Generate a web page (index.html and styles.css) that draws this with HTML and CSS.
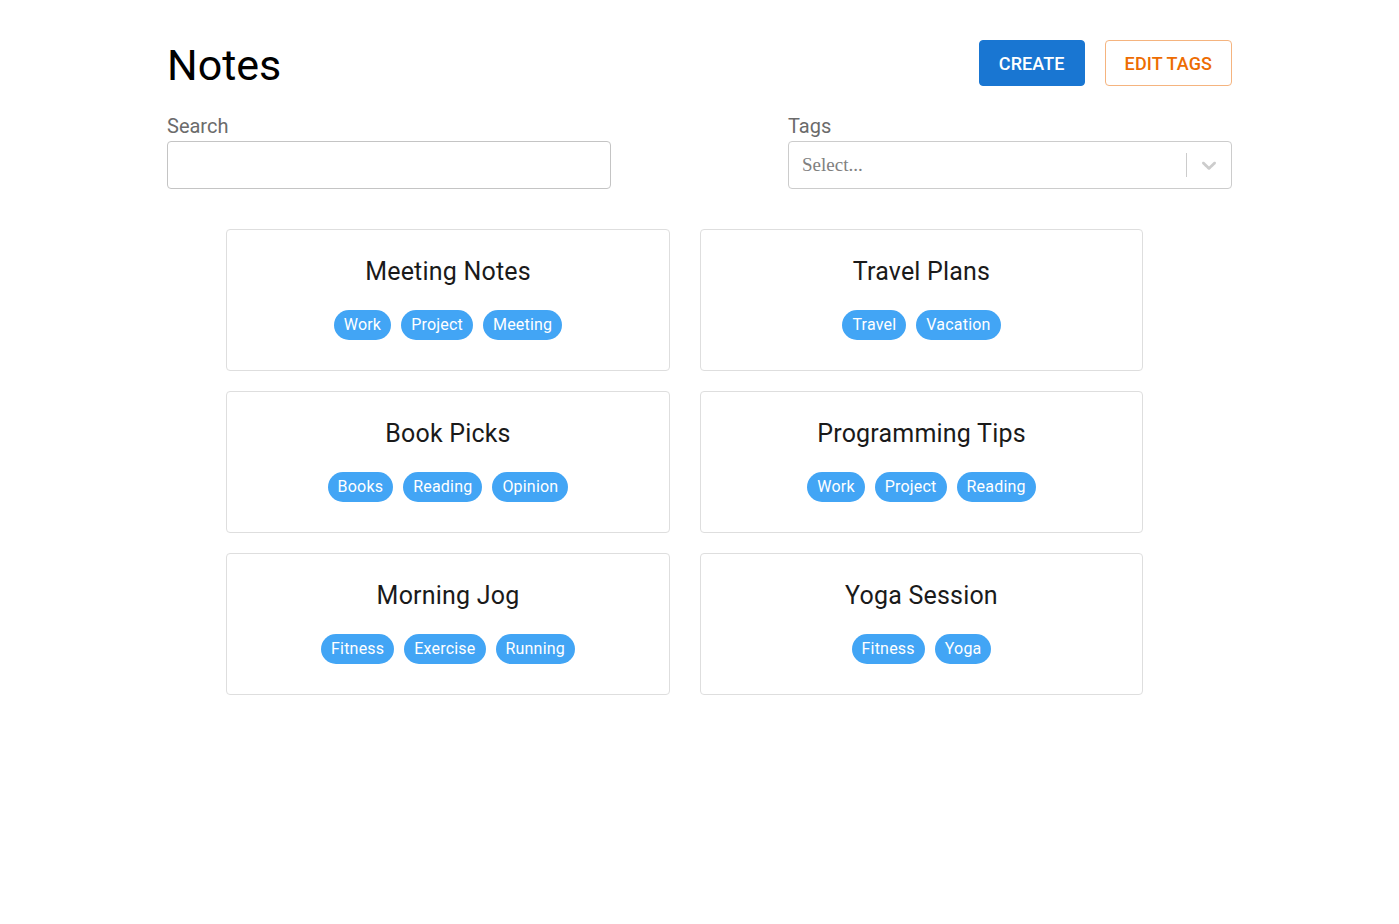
FILE: index.html
```html
<!DOCTYPE html>
<html lang="en">
<head>
<meta charset="utf-8">
<title>Notes</title>
<link rel="stylesheet" href="styles.css">
</head>
<body>
<div class="page">
  <header class="header">
    <h1 class="title">Notes</h1>
    <div class="actions">
      <button class="btn btn-primary">CREATE</button>
      <button class="btn btn-outline">EDIT TAGS</button>
    </div>
  </header>

  <div class="filters">
    <div class="field">
      <label class="label">Search</label>
      <input class="input" type="text">
    </div>
    <div class="field">
      <label class="label">Tags</label>
      <div class="select">
        <div class="select-value">Select...</div>
        <div class="select-indicators">
          <span class="select-sep"></span>
          <span class="select-arrow">
            <svg width="24" height="24" viewBox="0 0 20 20"><path fill="#cccccc" d="M4.516 7.548c0.436-0.446 1.043-0.481 1.576 0l3.908 3.747 3.908-3.747c0.533-0.481 1.141-0.446 1.574 0 0.436 0.445 0.408 1.197 0 1.615-0.406 0.418-4.695 4.502-4.695 4.502-0.217 0.223-0.502 0.335-0.787 0.335s-0.57-0.112-0.789-0.335c0 0-4.287-4.084-4.695-4.502s-0.436-1.170 0-1.615z"/></svg>
          </span>
        </div>
      </div>
    </div>
  </div>

  <div class="cards">
    <div class="card">
      <div class="card-title">Meeting Notes</div>
      <div class="tags"><span class="tag">Work</span><span class="tag">Project</span><span class="tag">Meeting</span></div>
    </div>
    <div class="card">
      <div class="card-title">Travel Plans</div>
      <div class="tags"><span class="tag">Travel</span><span class="tag">Vacation</span></div>
    </div>
    <div class="card">
      <div class="card-title">Book Picks</div>
      <div class="tags"><span class="tag">Books</span><span class="tag">Reading</span><span class="tag">Opinion</span></div>
    </div>
    <div class="card">
      <div class="card-title">Programming Tips</div>
      <div class="tags"><span class="tag">Work</span><span class="tag">Project</span><span class="tag">Reading</span></div>
    </div>
    <div class="card">
      <div class="card-title">Morning Jog</div>
      <div class="tags"><span class="tag">Fitness</span><span class="tag">Exercise</span><span class="tag">Running</span></div>
    </div>
    <div class="card">
      <div class="card-title">Yoga Session</div>
      <div class="tags"><span class="tag">Fitness</span><span class="tag">Yoga</span></div>
    </div>
  </div>
</div>
</body>
</html>
```

FILE: styles.css
```css
* { box-sizing: border-box; }

body {
  margin: 0;
  background: #fff;
  font-family: Roboto, "Liberation Sans", sans-serif;
  color: #000;
}

.page {
  width: 1065px;
  margin: 0 auto;
  padding-top: 40px;
}

.header {
  display: flex;
  justify-content: space-between;
  align-items: flex-start;
  height: 46px;
}

.title {
  margin: 0;
  font-size: 43px;
  font-weight: 400;
  line-height: 50px;
}

.actions {
  display: flex;
  gap: 20px;
}

.btn {
  height: 46px;
  padding: 0 19px;
  font-family: Roboto, "Liberation Sans", sans-serif;
  font-size: 18px;
  font-weight: 500;
  border-radius: 4px;
  cursor: pointer;
  letter-spacing: 0.1px;
}

.btn-primary {
  background: #1976d2;
  color: #fff;
  border: 1px solid #1976d2;
}

.btn-outline {
  background: #fff;
  color: #ed6c02;
  border: 1px solid #f5b47f;
}

.filters {
  display: flex;
  justify-content: space-between;
  margin-top: 28px;
}

.field {
  width: 444px;
  display: flex;
  flex-direction: column;
}

.label {
  font-size: 20px;
  line-height: 24px;
  color: #6b6b6b;
  margin-bottom: 3px;
}

.input {
  height: 48px;
  border: 1px solid #c4c4c4;
  border-radius: 4px;
  font-size: 18px;
  padding: 0 12px;
  outline: none;
}

.select {
  height: 48px;
  border: 1px solid #cccccc;
  border-radius: 4px;
  display: flex;
  align-items: center;
}

.select-value {
  flex: 1;
  padding-left: 13px;
  font-family: "Liberation Serif", "Times New Roman", serif;
  font-size: 19px;
  color: #808080;
}

.select-indicators {
  display: flex;
  align-items: center;
  align-self: stretch;
}

.select-sep {
  width: 1px;
  height: 24px;
  background: #cccccc;
}

.select-arrow {
  display: flex;
  padding: 0 10px;
}

.cards {
  display: grid;
  grid-template-columns: 444px 443px;
  column-gap: 30px;
  row-gap: 20px;
  margin-top: 40px;
  margin-left: 59px;
}

.card {
  height: 142px;
  border: 1px solid #dedede;
  border-radius: 4px;
  padding: 24px 16px 0;
  display: flex;
  flex-direction: column;
  align-items: center;
}

.card-title {
  font-size: 25px;
  font-weight: 400;
  line-height: 36px;
  letter-spacing: 0.2px;
  color: #1a1a1a;
}

.tags {
  display: flex;
  gap: 10px;
  margin-top: 20px;
}

.tag {
  height: 30px;
  line-height: 30px;
  padding: 0 10px;
  letter-spacing: 0.2px;
  border-radius: 15px;
  background: #42a5f5;
  color: #fff;
  font-size: 16px;
}
```
